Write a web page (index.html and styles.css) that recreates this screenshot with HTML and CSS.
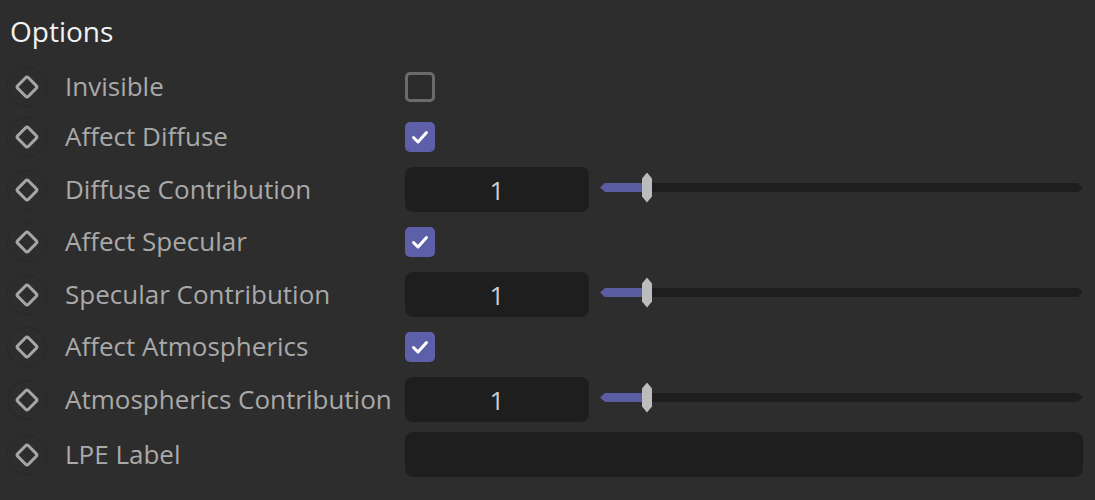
FILE: index.html
```html
<!DOCTYPE html>
<html lang="en">
<head>
<meta charset="utf-8">
<title>Options</title>
<link rel="stylesheet" href="styles.css">
</head>
<body>
<div class="panel">
  <h1 class="title">Options</h1>
  <div class="rows">
    <div class="row row-check">
      <span class="anim"><svg viewBox="0 0 26 26" width="26" height="26"><rect x="5.5" y="5.5" width="15" height="15" rx="2" transform="rotate(45 13 13)" fill="none" stroke="#a6a6a6" stroke-width="3"/></svg></span>
      <span class="label">Invisible</span>
      <div class="control"><span class="checkbox"></span></div>
    </div>
    <div class="row row-check">
      <span class="anim"><svg viewBox="0 0 26 26" width="26" height="26"><rect x="5.5" y="5.5" width="15" height="15" rx="2" transform="rotate(45 13 13)" fill="none" stroke="#a6a6a6" stroke-width="3"/></svg></span>
      <span class="label">Affect Diffuse</span>
      <div class="control"><span class="checkbox checked"><svg viewBox="0 0 30 30" width="30" height="30"><polyline points="8.5,15.5 13,20 21.5,10.5" fill="none" stroke="#ffffff" stroke-width="3" stroke-linecap="round" stroke-linejoin="round"/></svg></span></div>
    </div>
    <div class="row row-input">
      <span class="anim"><svg viewBox="0 0 26 26" width="26" height="26"><rect x="5.5" y="5.5" width="15" height="15" rx="2" transform="rotate(45 13 13)" fill="none" stroke="#a6a6a6" stroke-width="3"/></svg></span>
      <span class="label">Diffuse Contribution</span>
      <div class="control">
        <span class="number">1</span>
        <div class="slider"><div class="track"></div><span class="thumb"></span></div>
      </div>
    </div>
    <div class="row row-check">
      <span class="anim"><svg viewBox="0 0 26 26" width="26" height="26"><rect x="5.5" y="5.5" width="15" height="15" rx="2" transform="rotate(45 13 13)" fill="none" stroke="#a6a6a6" stroke-width="3"/></svg></span>
      <span class="label">Affect Specular</span>
      <div class="control"><span class="checkbox checked"><svg viewBox="0 0 30 30" width="30" height="30"><polyline points="8.5,15.5 13,20 21.5,10.5" fill="none" stroke="#ffffff" stroke-width="3" stroke-linecap="round" stroke-linejoin="round"/></svg></span></div>
    </div>
    <div class="row row-input">
      <span class="anim"><svg viewBox="0 0 26 26" width="26" height="26"><rect x="5.5" y="5.5" width="15" height="15" rx="2" transform="rotate(45 13 13)" fill="none" stroke="#a6a6a6" stroke-width="3"/></svg></span>
      <span class="label">Specular Contribution</span>
      <div class="control">
        <span class="number">1</span>
        <div class="slider"><div class="track"></div><span class="thumb"></span></div>
      </div>
    </div>
    <div class="row row-check">
      <span class="anim"><svg viewBox="0 0 26 26" width="26" height="26"><rect x="5.5" y="5.5" width="15" height="15" rx="2" transform="rotate(45 13 13)" fill="none" stroke="#a6a6a6" stroke-width="3"/></svg></span>
      <span class="label">Affect Atmospherics</span>
      <div class="control"><span class="checkbox checked"><svg viewBox="0 0 30 30" width="30" height="30"><polyline points="8.5,15.5 13,20 21.5,10.5" fill="none" stroke="#ffffff" stroke-width="3" stroke-linecap="round" stroke-linejoin="round"/></svg></span></div>
    </div>
    <div class="row row-input">
      <span class="anim"><svg viewBox="0 0 26 26" width="26" height="26"><rect x="5.5" y="5.5" width="15" height="15" rx="2" transform="rotate(45 13 13)" fill="none" stroke="#a6a6a6" stroke-width="3"/></svg></span>
      <span class="label">Atmospherics Contribution</span>
      <div class="control">
        <span class="number">1</span>
        <div class="slider"><div class="track"></div><span class="thumb"></span></div>
      </div>
    </div>
    <div class="row row-input">
      <span class="anim"><svg viewBox="0 0 26 26" width="26" height="26"><rect x="5.5" y="5.5" width="15" height="15" rx="2" transform="rotate(45 13 13)" fill="none" stroke="#a6a6a6" stroke-width="3"/></svg></span>
      <span class="label">LPE Label</span>
      <div class="control"><span class="text-field"></span></div>
    </div>
  </div>
</div>
</body>
</html>
```

FILE: styles.css
```css
* { box-sizing: border-box; }
html, body { margin: 0; padding: 0; }
body {
  background: #2d2d2d;
  font-family: "Open Sans", "Noto Sans", sans-serif;
  width: 1095px;
  height: 500px;
  overflow: hidden;
}
.panel { padding: 0 12px 0 7px; }
.title {
  margin: 0;
  padding: 11px 0 0 3px;
  height: 62px;
  font-size: 28px;
  font-weight: 400;
  color: #f2f2f2;
  line-height: 40px;
}
.rows { display: flex; flex-direction: column; }
.row { display: flex; align-items: center; }
.row-check { height: 50px; }
.row-input { height: 55px; }
.anim {
  width: 40px;
  height: 40px;
  border-radius: 50%;
  border: 1px solid #282828;
  display: flex;
  align-items: center;
  justify-content: center;
  flex: none;
}
.anim svg { display: block; }
.label {
  width: 340px;
  margin-left: 18px;
  flex: none;
  font-size: 26px;
  line-height: 34px;
  margin-top: -2px;
  color: #a9a9a9;
  white-space: nowrap;
}
.control { flex: 1; display: flex; align-items: center; height: 45px; }
.checkbox {
  width: 30px;
  height: 30px;
  border-radius: 5px;
  border: 3px solid #6b6b6b;
  background: #2b2b2b;
  display: block;
}
.checkbox.checked {
  border: none;
  background: #5d60a8;
}
.checkbox svg { display: block; }
.number {
  width: 184px;
  height: 45px;
  border-radius: 8px;
  background: #1e1e1e;
  color: #cfcfcf;
  font-size: 26px;
  display: flex;
  align-items: center;
  justify-content: center;
  flex: none;
}
.slider {
  flex: 1;
  margin-left: 11px;
  position: relative;
  height: 30px;
  margin-top: -4px;
  display: flex;
  align-items: center;
}
.track {
  width: 100%;
  height: 9px;
  background: linear-gradient(to right, #5a5da2 0 43px, #1e1e1e 43px);
  clip-path: polygon(0 50%, 5px 0, calc(100% - 5px) 0, 100% 50%, calc(100% - 5px) 100%, 5px 100%);
}
.thumb {
  position: absolute;
  left: 42px;
  top: 0;
  width: 10px;
  height: 30px;
  background: #bcbcbc;
  clip-path: polygon(50% 0, 100% 6px, 100% calc(100% - 6px), 50% 100%, 0 calc(100% - 6px), 0 6px);
}
.text-field {
  width: 100%;
  height: 45px;
  border-radius: 8px;
  background: #1e1e1e;
}
```
